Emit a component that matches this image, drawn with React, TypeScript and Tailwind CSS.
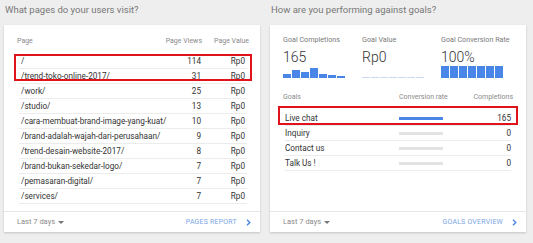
import React from "react";

const pages: [string, string][] = [
  ["/", "114"],
  ["/trend-toko-online-2017/", "31"],
  ["/work/", "25"],
  ["/studio/", "13"],
  ["/cara-membuat-brand-image-yang-kuat/", "10"],
  ["/brand-adalah-wajah-dari-perusahaan/", "9"],
  ["/trend-desain-website-2017/", "8"],
  ["/brand-bukan-sekedar-logo/", "7"],
  ["/pemasaran-digital/", "7"],
  ["/services/", "7"],
];

const goals = [
  { name: "Live chat", rate: 100, count: "165" },
  { name: "Inquiry", rate: 0, count: "0" },
  { name: "Contact us", rate: 0, count: "0" },
  { name: "Talk Us !", rate: 0, count: "0" },
];

const sparkline = [4, 8, 6.5, 10, 4, 3, 2];

function PageRow({ path, views }: { path: string; views: string }) {
  return (
    <div className="mx-[5px] px-[2px] h-[15px] flex items-center border-b border-[#ececec] text-[8.2px] text-[#333]">
      <span className="flex-1 truncate">{path}</span>
      <span className="text-right">{views}</span>
      <span className="w-[44px] text-right">Rp0</span>
    </div>
  );
}

function Footer({ label }: { label: string }) {
  return (
    <div className="h-[21px] border-t border-[#e6e6e6] flex items-center pl-[13px] pr-[9px]">
      <span className="text-[7.5px] text-[#8a8a8a] flex items-center gap-[3px]">
        Last 7 days
        <span className="w-0 h-0 border-l-[3px] border-r-[3px] border-t-[3px] border-l-transparent border-r-transparent border-t-[#777]" />
      </span>
      <span className="ml-auto text-[7px] tracking-[0.2px] text-[#7ba6e4]">{label}</span>
      <svg className="ml-[9px]" width="5" height="7" viewBox="0 0 5 7">
        <path d="M1 0.8 L3.8 3.5 L1 6.2" fill="none" stroke="#4a86e8" strokeWidth="1.4" />
      </svg>
    </div>
  );
}

function Metric({ label, value, children }: { label: string; value: string; children: React.ReactNode }) {
  return (
    <div className="w-[79px]">
      <div className="text-[7.2px] leading-[10px] text-[#7a7a7a]">{label}</div>
      <div className="mt-[4px] text-[14px] leading-[16px] font-light text-[#333]">{value}</div>
      <div className="mt-[2px] h-[11px] flex items-end gap-[1px]">{children}</div>
    </div>
  );
}

export default function App() {
  return (
    <div className="w-[533px] h-[243px] bg-[#eeeeee] flex gap-[10px] pl-[4px] overflow-hidden" style={{ fontFamily: "Roboto, 'Liberation Sans', sans-serif" }}>
      {/* pages */}
      <div className="w-[256px] flex flex-col">
        <div className="h-[25px] flex items-center pl-[1px] pb-[5px] text-[9.5px] text-[#777]">
          What pages do your users visit?
        </div>
        <div className="h-[207px] bg-white shadow-[0_1px_2px_rgba(0,0,0,0.18)] flex flex-col">
          <div className="flex-1 pl-[10px] pr-[8px] pt-[10px]">
            <div className="px-[3px] h-[12px] flex items-center text-[7px] text-[#8a8a8a]">
              <span className="flex-1">Page</span>
              <span className="text-right">Page Views</span>
              <span className="w-[47px] text-right">Page Value</span>
            </div>
            <div className="mt-[7px]">
              <div className="relative">
                <PageRow path={pages[0][0]} views={pages[0][1]} />
                <PageRow path={pages[1][0]} views={pages[1][1]} />
                <div className="absolute left-0 right-0 top-0 h-[27px] border-2 border-[#e0131b]" />
              </div>
              {pages.slice(2).map(([p, v]) => (
                <PageRow key={p} path={p} views={v} />
              ))}
            </div>
          </div>
          <Footer label="PAGES REPORT" />
        </div>
      </div>

      {/* goals */}
      <div className="w-[256px] flex flex-col">
        <div className="h-[25px] flex items-center pl-[1px] pb-[5px] text-[9.5px] text-[#777]">
          How are you performing against goals?
        </div>
        <div className="h-[207px] bg-white shadow-[0_1px_2px_rgba(0,0,0,0.18)] flex flex-col">
          <div className="flex-1">
            <div className="pt-[10px] pl-[13px] flex">
              <Metric label="Goal Completions" value="165">
                {sparkline.map((h, i) => (
                  <div key={i} className="w-[8px] bg-[#4a86e8]" style={{ height: `${h}px` }} />
                ))}
              </Metric>
              <Metric label="Goal Value" value="Rp0">
                {sparkline.map((_, i) => (
                  <div key={i} className="w-[8px] h-[1px] bg-[#c9d8f2]" />
                ))}
              </Metric>
              <Metric label="Goal Conversion Rate" value="100%">
                {sparkline.map((_, i) => (
                  <div key={i} className="w-[8px] h-[12px] bg-[#4a86e8]" />
                ))}
              </Metric>
            </div>
            <div className="mt-[13px] px-[8px]">
              <div className="px-[5px] h-[12px] flex items-center text-[7px] text-[#8a8a8a]">
                <span className="w-[116px]">Goals</span>
                <span className="flex-1">Conversion rate</span>
                <span>Completions</span>
              </div>
              <div className="mt-[8px]">
                {goals.map((g, i) => (
                  <div key={g.name} className="relative">
                    <div className="mx-[7px] h-[15px] flex items-center border-b border-[#ececec] text-[8.2px] text-[#333]">
                      <span className="w-[114px]">{g.name}</span>
                      <div className="w-[44px] h-[3px] bg-[#e3e3e3]">
                        <div className="h-full bg-[#4a86e8]" style={{ width: `${g.rate}%` }} />
                      </div>
                      <span className="ml-auto">{g.count}</span>
                    </div>
                    {i === 0 && <div className="absolute left-0 right-0 -top-[5px] h-[19px] border-2 border-[#e0131b]" />}
                  </div>
                ))}
              </div>
            </div>
          </div>
          <Footer label="GOALS OVERVIEW" />
        </div>
      </div>
    </div>
  );
}
